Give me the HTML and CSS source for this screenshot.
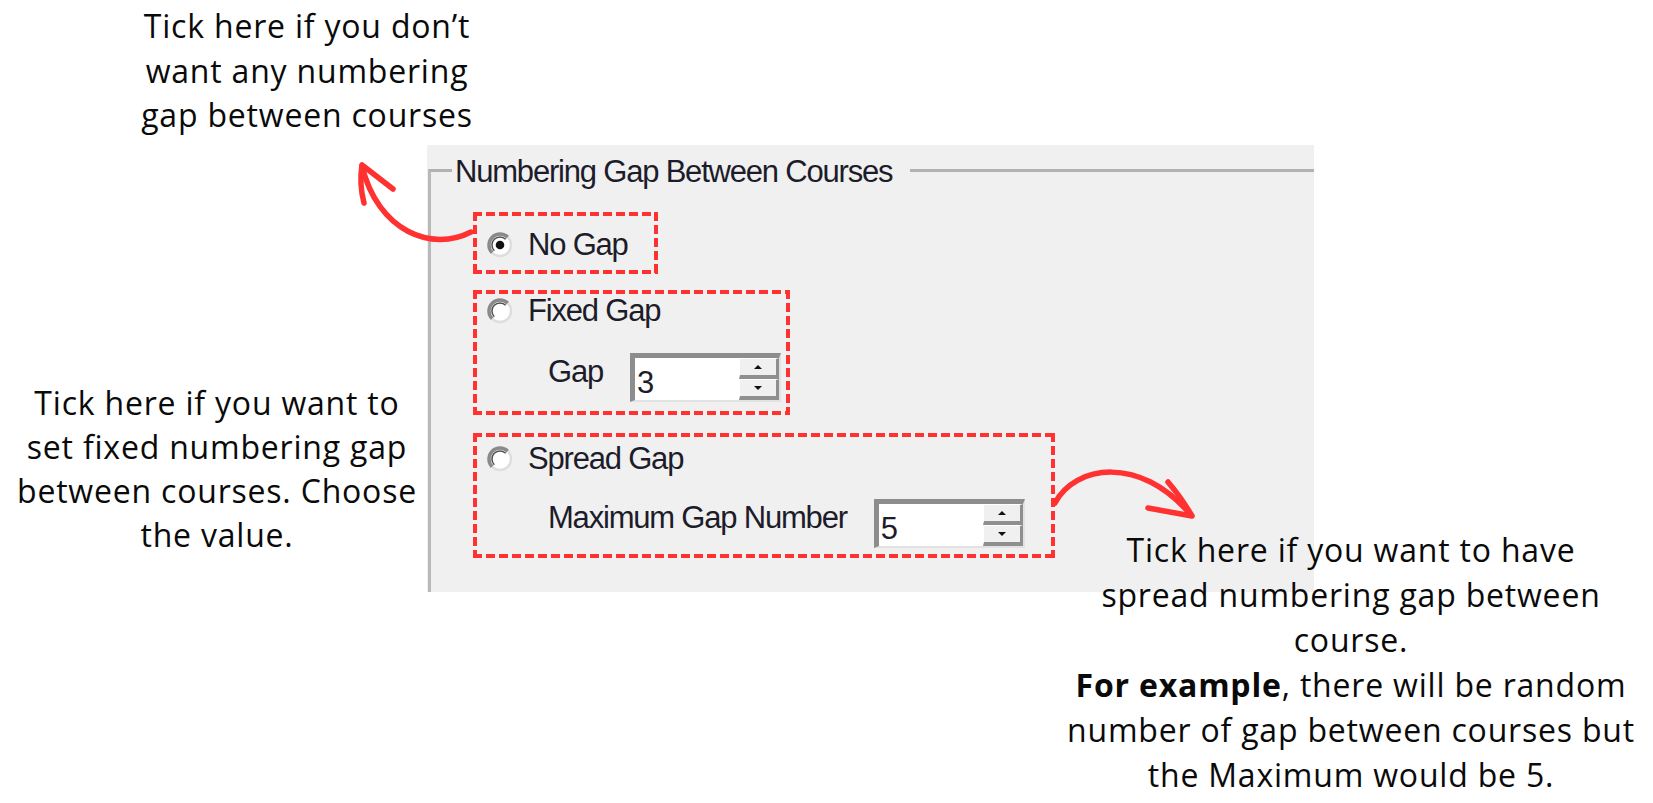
FILE: index.html
```html
<!DOCTYPE html>
<html lang="en">
<head>
  <meta charset="UTF-8">
  <meta name="viewport" content="width=device-width, initial-scale=1.0">
  <title>Numbering Gap Between Courses</title>
  <link rel="stylesheet" href="styles.css">
</head>
<body>
  <div class="canvas">
    <!-- the settings dialog fragment -->
    <div class="panel">
      <fieldset class="group">
        <legend>Numbering Gap Between Courses</legend>
        <div class="options">

          <div class="opt opt-none">
            <label class="radio-row">
              <svg class="radio" viewBox="0 0 28 28">
                <circle cx="14" cy="14" r="11" fill="#fff"/>
                <path d="M6.2 21.8 A11 11 0 0 1 21.8 6.2" fill="none" stroke="#8a8a8a" stroke-width="3.5"/>
                <path d="M21.8 6.2 A11 11 0 0 1 6.2 21.8" fill="none" stroke="#dedede" stroke-width="2.5"/>
                <path d="M8.3 19.7 A8 8 0 0 1 19.7 8.3" fill="none" stroke="#4e4e4e" stroke-width="1.5"/>
                <circle cx="14" cy="14" r="4.3" fill="#111"/>
              </svg>
              <span>No Gap</span>
            </label>
          </div>

          <div class="opt opt-fixed">
            <label class="radio-row">
              <svg class="radio" viewBox="0 0 28 28">
                <circle cx="14" cy="14" r="11" fill="#fff"/>
                <path d="M6.2 21.8 A11 11 0 0 1 21.8 6.2" fill="none" stroke="#8a8a8a" stroke-width="3.5"/>
                <path d="M21.8 6.2 A11 11 0 0 1 6.2 21.8" fill="none" stroke="#dedede" stroke-width="2.5"/>
                <path d="M8.3 19.7 A8 8 0 0 1 19.7 8.3" fill="none" stroke="#4e4e4e" stroke-width="1.5"/>
              </svg>
              <span>Fixed Gap</span>
            </label>
            <div class="value-row">
              <span>Gap</span>
              <div class="spin">
                <span class="spin-value">3</span>
                <div class="spin-btns">
                  <div class="spin-btn up"></div>
                  <div class="spin-btn down"></div>
                </div>
              </div>
            </div>
          </div>

          <div class="opt opt-spread">
            <label class="radio-row">
              <svg class="radio" viewBox="0 0 28 28">
                <circle cx="14" cy="14" r="11" fill="#fff"/>
                <path d="M6.2 21.8 A11 11 0 0 1 21.8 6.2" fill="none" stroke="#8a8a8a" stroke-width="3.5"/>
                <path d="M21.8 6.2 A11 11 0 0 1 6.2 21.8" fill="none" stroke="#dedede" stroke-width="2.5"/>
                <path d="M8.3 19.7 A8 8 0 0 1 19.7 8.3" fill="none" stroke="#4e4e4e" stroke-width="1.5"/>
              </svg>
              <span>Spread Gap</span>
            </label>
            <div class="value-row">
              <span>Maximum Gap Number</span>
              <div class="spin">
                <span class="spin-value">5</span>
                <div class="spin-btns">
                  <div class="spin-btn up"></div>
                  <div class="spin-btn down"></div>
                </div>
              </div>
            </div>
          </div>

        </div>
      </fieldset>
    </div>

    <!-- annotations -->
    <p class="note note-nogap">Tick here if you don’t<br>want any numbering<br>gap between courses</p>
    <p class="note note-fixed">Tick here if you want to<br>set fixed numbering gap<br>between courses. Choose<br>the value.</p>
    <p class="note note-spread">Tick here if you want to have<br>spread numbering gap between<br>course.<br><b>For example</b>, there will be random<br>number of gap between courses but<br>the Maximum would be 5.</p>

    <svg class="arrows" viewBox="0 0 1653 803">
      <g fill="none" stroke="#ff3131" stroke-width="5.5" stroke-linecap="round" stroke-linejoin="round">
        <path d="M471 232 C432 252 378 232 362 166"/>
        <path d="M393 189 L362 165 Q359 184 364 203"/>
        <path d="M1055 503 C1075 465 1140 455 1190 514"/>
        <path d="M1168 482 Q1181 497 1192 516 L1148 508"/>
      </g>
    </svg>
  </div>
</body>
</html>
```

FILE: styles.css
```css
body {
  margin: 0;
  background: #fff;
}

.canvas {
  position: relative;
  width: 1653px;
  height: 803px;
  overflow: hidden;
  font-family: "Open Sans", "Noto Sans", sans-serif;
}

/* ---- dialog ---- */
.panel {
  position: absolute;
  left: 427px;
  top: 145px;
  width: 887px;
  height: 447px;
  background: #f0f0f0;
  overflow: hidden;
  font-family: "Liberation Sans", Arial, sans-serif;
  font-size: 31px;
  letter-spacing: -1.2px;
  color: #1d1c2a;
}

.group {
  box-sizing: border-box;
  height: 441px;
  min-width: 0;
  margin: 6px 0 0 1px;
  padding: 0 0 0 21px;
  border: 0;
  border-top: 3px solid #b2b2b2;
  border-left: 3px solid #b9b9b9;
}

.group legend {
  padding: 3px 18px 0 3px;
  line-height: normal;
}

.options {
  display: flex;
  flex-direction: column;
  align-items: flex-start;
  margin: 22px 0 0 21px;
}

.opt {
  box-sizing: border-box;
  padding-left: 13px;
  background:
    repeating-linear-gradient(90deg, #ff3131 0 9px, transparent 9px 13px) left top / 100% 4px no-repeat,
    repeating-linear-gradient(90deg, #ff3131 0 9px, transparent 9px 13px) left bottom / 100% 4px no-repeat,
    repeating-linear-gradient(180deg, #ff3131 0 9px, transparent 9px 13px) left top / 4px 100% no-repeat,
    repeating-linear-gradient(180deg, #ff3131 0 9px, transparent 9px 13px) right top / 4px 100% no-repeat;
}

.opt-none {
  width: 185px;
  height: 62px;
  padding-top: 18px;
}

.opt-fixed {
  width: 317px;
  height: 125px;
  padding-top: 6px;
  margin-top: 16px;
}

.opt-spread {
  width: 582px;
  height: 125px;
  padding-top: 11px;
  margin-top: 18px;
}

.radio-row {
  display: flex;
  align-items: center;
  gap: 14px;
  height: 30px;
  line-height: 30px;
}

.radio {
  flex: none;
  width: 28px;
  height: 28px;
}

.value-row {
  display: flex;
  align-items: flex-start;
  gap: 27px;
  margin-left: 62px;
}
.opt-fixed .value-row { margin-top: 27px; }
.opt-spread .value-row { margin-top: 25px; }

.value-row > span {
  line-height: 30px;
  margin-top: 4px;
}

/* spin box */
.spin {
  display: flex;
  box-sizing: border-box;
  width: 151px;
  height: 49px;
  background: #fff;
  border-top: 5px solid #8d8d8d;
  border-left: 5px solid #8d8d8d;
  border-right: 2px solid #e2e2e2;
  border-bottom: 2px solid #e2e2e2;
}

.spin-value {
  flex: 1;
  align-self: flex-end;
  line-height: 34px;
  padding-left: 2px;
  letter-spacing: 0;
}

.spin-btns {
  display: flex;
  flex-direction: column;
  width: 40px;
}

.spin-btn {
  flex: 1;
  display: flex;
  align-items: center;
  justify-content: center;
  background: #f0f0f0;
  border-top: 1px solid #fff;
  border-left: 1px solid #fff;
  border-right: 3px solid #8f8f8f;
  border-bottom: 4px solid #8f8f8f;
}

.spin-btn::after {
  content: "";
  border-left: 4px solid transparent;
  border-right: 4px solid transparent;
}
.spin-btn.up::after { border-bottom: 4px solid #111; }
.spin-btn.down::after { border-top: 4px solid #111; }

/* ---- annotations ---- */
.note {
  position: absolute;
  margin: 0;
  font-size: 32px;
  line-height: 44.5px;
  letter-spacing: 0.8px;
  text-align: center;
  color: #0a0a0a;
}

.note-nogap {
  left: 107px;
  top: 4px;
  width: 400px;
}

.note-fixed {
  left: 17px;
  top: 381px;
  width: 400px;
  line-height: 44px;
}

.note-spread {
  left: 1051px;
  top: 527px;
  width: 600px;
  line-height: 45px;
}

.note b {
  font-weight: 700;
}

.arrows {
  position: absolute;
  left: 0;
  top: 0;
  width: 1653px;
  height: 803px;
  pointer-events: none;
}
```
